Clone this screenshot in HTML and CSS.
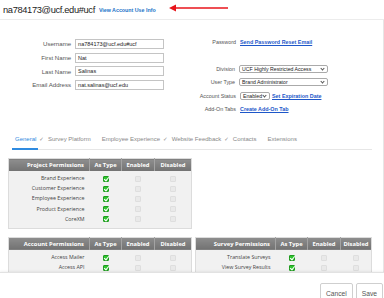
FILE: index.html
```html
<!DOCTYPE html>
<html lang="en">
    <head>
        <meta charset="UTF-8" />
        <title>User Details</title>
        <link rel="stylesheet" href="styles.css">
    </head>
    <body>
        <div class="page">

            <header class="top">
                <h1 class="user-id">na784173@ucf.edu#ucf</h1>
                <a class="top-link">View Account Use Info</a>
                <svg class="arrow" width="60" height="8" viewBox="0 0 60 8">
                    <line x1="5" y1="4" x2="59" y2="4" stroke="#e8141b" stroke-width="1.4" />
                    <polygon points="0,4 7,0.5 7,7.5" fill="#e8141b" />
                </svg>
            </header>

            <div class="content">
                <section class="details">
                    <div class="col">
                        <div class="field"><label>Username</label><div class="input">na784173@ucf.edu#ucf</div></div>
                        <div class="field"><label>First Name</label><div class="input">Nat</div></div>
                        <div class="field"><label>Last Name</label><div class="input">Salinas</div></div>
                        <div class="field"><label>Email Address</label><div class="input">nat.salinas@ucf.edu</div></div>
                    </div>
                    <div class="col col-right">
                        <div class="field"><label>Password</label><a class="link">Send Password Reset Email</a></div>
                        <div class="field"></div>
                        <div class="field">
                            <label>Division</label>
                            <div class="select select-wide">UCF Highly Restricted Access<span class="caret"></span></div>
                        </div>
                        <div class="field">
                            <label>User Type</label>
                            <div class="select select-wide">Brand Administrator<span class="caret"></span></div>
                        </div>
                        <div class="field">
                            <label>Account Status</label>
                            <div class="select select-small">Enabled<span class="caret"></span></div>
                            <a class="link">Set Expiration Date</a>
                        </div>
                        <div class="field"><label>Add-On Tabs</label><a class="link">Create Add-On Tab</a></div>
                    </div>
                </section>

                <nav class="tabs">
                    <span class="tab active">General</span>
                    <span class="tab"><span class="tick">&#10003;</span>Survey Platform</span>
                    <span class="tab">Employee Experience</span>
                    <span class="tab"><span class="tick">&#10003;</span>Website Feedback</span>
                    <span class="tab"><span class="tick">&#10003;</span>Contacts</span>
                    <span class="tab">Extensions</span>
                </nav>

                <div class="perms">
                    <table class="perm">
                        <thead>
                            <tr><th class="name">Project Permissions</th><th class="c1">As Type</th><th class="c2">Enabled</th><th class="c3">Disabled</th></tr>
                        </thead>
                        <tbody>
                            <tr class="pad"><td colspan="4"></td></tr>
                            <tr><td class="name">Brand Experience</td><td><span class="check on"></span></td><td><span class="check"></span></td><td><span class="check"></span></td></tr>
                            <tr><td class="name">Customer Experience</td><td><span class="check on"></span></td><td><span class="check"></span></td><td><span class="check"></span></td></tr>
                            <tr><td class="name">Employee Experience</td><td><span class="check on"></span></td><td><span class="check"></span></td><td><span class="check"></span></td></tr>
                            <tr><td class="name">Product Experience</td><td><span class="check on"></span></td><td><span class="check"></span></td><td><span class="check"></span></td></tr>
                            <tr><td class="name">CoreXM</td><td><span class="check on"></span></td><td><span class="check"></span></td><td><span class="check"></span></td></tr>
                            <tr class="pad-end"><td colspan="4"></td></tr>
                        </tbody>
                    </table>
                    <div></div>

                    <table class="perm">
                        <thead>
                            <tr><th class="name">Account Permissions</th><th class="c1">As Type</th><th class="c2">Enabled</th><th class="c3">Disabled</th></tr>
                        </thead>
                        <tbody>
                            <tr class="pad"><td colspan="4"></td></tr>
                            <tr><td class="name">Access Mailer</td><td><span class="check on"></span></td><td><span class="check"></span></td><td><span class="check"></span></td></tr>
                            <tr><td class="name">Access API</td><td><span class="check on"></span></td><td><span class="check"></span></td><td><span class="check"></span></td></tr>
                            <tr><td class="name">Access Stats</td><td><span class="check on"></span></td><td><span class="check"></span></td><td><span class="check"></span></td></tr>
                        </tbody>
                    </table>
                    <table class="perm perm-survey">
                        <thead>
                            <tr><th class="name">Survey Permissions</th><th class="c1">As Type</th><th class="c2">Enabled</th><th class="c3">Disabled</th></tr>
                        </thead>
                        <tbody>
                            <tr class="pad"><td colspan="4"></td></tr>
                            <tr><td class="name">Translate Surveys</td><td><span class="check on"></span></td><td><span class="check"></span></td><td><span class="check"></span></td></tr>
                            <tr><td class="name">View Survey Results</td><td><span class="check on"></span></td><td><span class="check"></span></td><td><span class="check"></span></td></tr>
                            <tr><td class="name">Edit Surveys</td><td><span class="check on"></span></td><td><span class="check"></span></td><td><span class="check"></span></td></tr>
                        </tbody>
                    </table>
                </div>
            </div>

            <footer class="actions">
                <button class="btn">Cancel</button>
                <button class="btn">Save</button>
            </footer>

        </div>
    </body>
</html>
```

FILE: styles.css
```css
body {
    margin: 0;
    font-family: 'Liberation Sans', Arial, sans-serif;
    background-color: #fff;
    color: #333;
}

.page {
    position: relative;
    width: 384px;
    height: 298px;
    overflow: hidden;
}

/* header */

.top {
    display: flex;
    align-items: center;
    height: 19px;
    padding-left: 3px;
    border-bottom: 1px solid #ececec;
}

.user-id {
    margin: 0;
    font-size: 9.3px;
    font-weight: normal;
    color: #222;
    letter-spacing: -0.35px;
}

.top-link {
    margin-left: 4px;
    margin-top: 1px;
    font-size: 5.3px;
    font-weight: bold;
    color: #1a73c8;
}

.arrow {
    margin-left: 13px;
    margin-top: -3px;
}

.content {
    width: 383px;
    height: 278px;
    border-right: 1px solid #e6e6e6;
}

/* user details */

.details {
    display: flex;
    height: 97px;
    padding-top: 17px;
    box-sizing: border-box;
}

.col {
    display: flex;
    flex-direction: column;
    width: 164px;
}

.col-right {
    margin-top: -2px;
}

.field {
    display: flex;
    align-items: center;
    height: 13.7px;
    font-size: 6.1px;
    white-space: nowrap;
}

.col-right .field {
    height: 13.5px;
    font-size: 5.4px;
}

.field label {
    width: 72px;
    margin-right: 4px;
    text-align: right;
    color: #555;
}

.input {
    width: 90px;
    height: 10px;
    line-height: 8px;
    padding-left: 2px;
    border: 1px solid #c4c4c4;
    box-sizing: border-box;
    color: #222;
    font-size: 5.5px;
}

.link {
    color: #1d57c9;
    font-weight: bold;
    text-decoration: underline;
}

.select {
    position: relative;
    height: 8px;
    line-height: 6px;
    padding-left: 2px;
    border: 1px solid #aaa;
    border-radius: 2px;
    box-sizing: border-box;
    color: #222;
    font-size: 5.2px;
}

.select-wide {
    width: 90px;
}

.select-small {
    width: 30px;
    margin-right: 2px;
}

.caret {
    position: absolute;
    right: 3px;
    top: 1px;
    width: 2px;
    height: 2px;
    border-right: 1px solid #555;
    border-bottom: 1px solid #555;
    transform: rotate(45deg);
}

/* tabs */

.tabs {
    display: flex;
    height: 20px;
    margin: 12px 11px 0 12px;
    padding-left: 3px;
    border-bottom: 1px solid #e6e6e6;
    font-size: 6px;
    color: #888;
}

.tab {
    position: relative;
    display: flex;
    align-items: center;
    margin-right: 11px;
}

.tick {
    margin-left: -8px;
    margin-right: 4px;
    font-family: 'DejaVu Sans', sans-serif;
    font-size: 5.5px;
}

.tab.active {
    color: #2f8be0;
}

.tab.active::after {
    content: "";
    position: absolute;
    left: -3px;
    right: -2px;
    bottom: -1px;
    height: 2px;
    background-color: #2f8be0;
}

/* permission tables */

.perms {
    display: grid;
    grid-template-columns: 184px 177px;
    column-gap: 3px;
    row-gap: 8px;
    padding-left: 8px;
    margin-top: 8px;
}

.perm {
    border-collapse: collapse;
    width: 184px;
    font-family: 'Open Sans', sans-serif;
    font-size: 5.8px;
    background-color: #f1f1f1;
    border: 1px solid #dcdcdc;
}

.perm-survey {
    width: 177px;
}

.perm th {
    height: 12px;
    padding: 0;
    color: #fff;
    font-weight: bold;
    background: linear-gradient(#8e8e8e, #727272);
    border-left: 1px solid #a3a3a3;
}

.perm th.name {
    text-align: right;
    padding-right: 5px;
    border-left: none;
}

.perm .c1 { width: 31px; }
.perm .c2 { width: 32px; }
.perm .c3 { width: 36px; }

.perm-survey .c1 { width: 31px; }
.perm-survey .c2 { width: 32px; }
.perm-survey .c3 { width: 30px; }

.perm td {
    height: 10.2px;
    padding: 0;
    text-align: center;
    color: #444;
    font-size: 5.3px;
}

.perm td.name {
    text-align: right;
    padding-right: 5px;
}

.perm .pad td {
    height: 2px;
}

.perm .pad-end td {
    height: 4px;
}

.check {
    display: inline-block;
    width: 6px;
    height: 6px;
    vertical-align: middle;
    background-color: #e9e9e9;
    border: 1px solid #dedede;
    border-radius: 1px;
    box-sizing: border-box;
}

.check.on {
    position: relative;
    background-color: #2ec52e;
    border-color: #1f9a1f;
}

.check.on::after {
    content: "";
    position: absolute;
    left: 1px;
    top: -1px;
    width: 2px;
    height: 4px;
    border-right: 1px solid #fff;
    border-bottom: 1px solid #fff;
    transform: rotate(40deg);
}

/* footer */

.actions {
    position: absolute;
    left: 0;
    right: 0;
    top: 272px;
    bottom: 0;
    display: flex;
    justify-content: flex-end;
    align-items: flex-start;
    gap: 3px;
    padding: 10px 1px 0 0;
    background-color: #fff;
    border-top: 1px solid #e2e2e2;
    box-shadow: 0 -1px 2px rgba(0, 0, 0, 0.06);
}

.btn {
    height: 20px;
    padding: 0 5px;
    font-family: 'Liberation Sans', Arial, sans-serif;
    font-size: 6.7px;
    color: #555;
    background-color: #fff;
    border: 1px solid #cfcfcf;
    border-radius: 2px;
}
```
